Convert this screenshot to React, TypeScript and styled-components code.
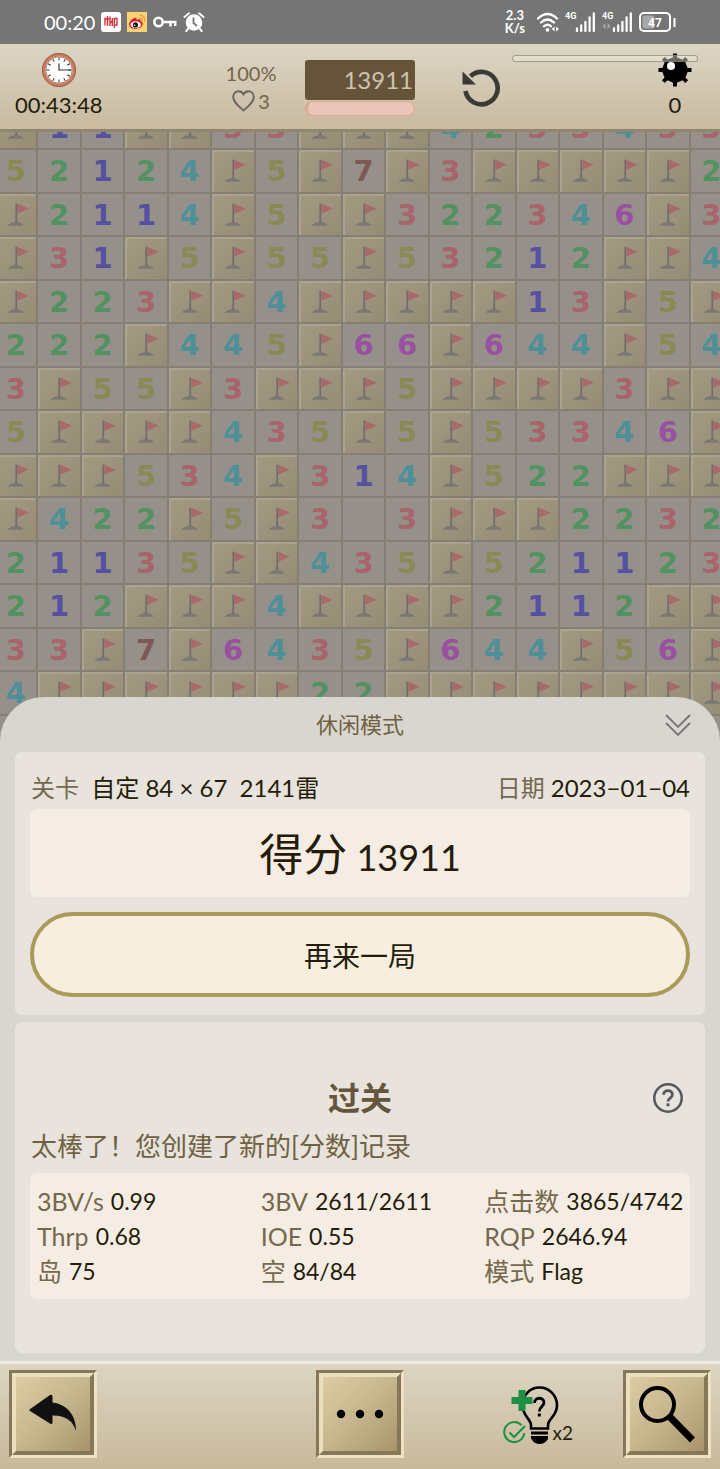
import React from "react";
import styled, { createGlobalStyle, css } from "styled-components";

const GlobalStyle = createGlobalStyle`
  *, *::before, *::after { box-sizing: border-box; }
  body {
    margin: 0;
    background: #d9d6cf;
    color: #241c08;
    font-family: Lato, "Noto Sans CJK SC", sans-serif;
  }
  button { font: inherit; color: inherit; margin: 0; padding: 0; cursor: pointer; }
  h1, h2, p, dl, dd, dt { margin: 0; font-weight: 400; }
`;

const Screen = styled.div`
  display: flex;
  flex-direction: column;
  min-height: 100vh;
  overflow: hidden;
`;

/* ---------- status bar ---------- */

const StatusBar = styled.div`
  display: flex;
  align-items: center;
  justify-content: space-between;
  height: 44px;
  padding: 0 44px;
  background: #757575;
  color: #fff;
  svg { display: block; }
`;

const StatusGroup = styled.div<{ $gap: number }>`
  display: flex;
  align-items: center;
  gap: ${(p) => p.$gap}px;
`;

const StatusTime = styled.span`
  font-size: 20px;
  line-height: 24px;
`;

const NetSpeed = styled.span`
  margin-right: 6px;
  font-size: 13px;
  font-weight: 700;
  line-height: 13px;
  text-align: center;
`;

/* ---------- game header ---------- */

const Header = styled.header`
  display: grid;
  grid-template-columns: 197fr 108fr 110fr 97fr 208fr;
  height: 88px;
  background: linear-gradient(#dcd5c4, #c9baa0);
  border-bottom: 3px solid #8f8670;
`;

const TimerBox = styled.div`
  display: flex;
  flex-direction: column;
  align-items: center;
  justify-self: start;
  padding: 9px 0 0 15px;
  svg { display: block; }
`;

const HeaderValue = styled.span`
  font-size: 22px;
  line-height: 28px;
  margin-top: 4px;
`;

const LivesBox = styled.div`
  display: flex;
  flex-direction: column;
  align-items: center;
  padding-top: 15px;
  color: #73664b;
  font-size: 20px;
  line-height: 28px;
`;

const Lives = styled.span`
  display: flex;
  align-items: center;
  gap: 3px;
`;

const ScoreBox = styled.div`
  padding-top: 16px;
`;

const ScoreValue = styled.div`
  height: 40px;
  padding-right: 2px;
  border-radius: 3px;
  background: #65543a;
  color: #cdc3b0;
  font-size: 24px;
  line-height: 40px;
  text-align: right;
`;

const ScoreBar = styled.div`
  height: 15px;
  margin-top: 1px;
  border: 1px solid #dfa892;
  border-left-width: 3px;
  border-radius: 8px;
  background: #eac6ba;
`;

const RestartButton = styled.button`
  justify-self: end;
  align-self: start;
  margin: 23px 12px 0 0;
  border: 0;
  background: none;
  svg { display: block; }
`;

const MinesBox = styled.div`
  position: relative;
  display: flex;
  flex-direction: column;
  align-items: flex-end;
  padding: 9px 28px 0 0;
  svg { display: block; }
`;

const MineCount = styled(HeaderValue)`
  width: 34px;
  text-align: center;
`;

const MineProgress = styled.div`
  position: absolute;
  top: 11px;
  left: 0;
  right: 22px;
  height: 7px;
  border: 1px solid rgba(130, 125, 110, 0.65);
  border-radius: 4px;
  background: rgba(240, 235, 222, 0.45);
`;

/* ---------- board ---------- */

const Board = styled.main`
  overflow: hidden;
  background: #949089;
`;

const Grid = styled.div`
  display: grid;
  grid-template-columns: repeat(17, 1fr);
  margin: -25px -14px 0 -5px;
`;

const numberColors: Record<string, string> = {
  "1": "#5650a0",
  "2": "#529160",
  "3": "#a8646a",
  "4": "#4f9098",
  "5": "#8a8954",
  "6": "#9a50a0",
  "7": "#7f5a54",
};

const Cell = styled.div<{ $value: string }>`
  display: flex;
  align-items: center;
  justify-content: center;
  aspect-ratio: 1;
  min-width: 0;
  border: 0 solid #857f73;
  border-width: 0 2px 2px 0;
  background: #95918a;
  color: ${(p) => numberColors[p.$value] ?? "inherit"};
  font: 700 29px/32px "DejaVu Sans", sans-serif;
  svg { display: block; width: 100%; height: 100%; }
  ${(p) =>
    p.$value === "F" &&
    css`
      background: linear-gradient(135deg, #a39a82, #968c76);
      box-shadow: inset 2px 2px 0 #aaa38f;
    `}
`;

const rows = [
  "F11FF33FFF4233433",
  "52124F5F7F3FFFFF2",
  "F2114F5FF322346F3",
  "F31F5F55F53212FF4",
  "F223FF4FFFFF13F5F",
  "222F445F66F644F54",
  "3F55F3FFF5FFFF3FF",
  "5FFFF435F5F53346F",
  "FFF534F314F522FFF",
  "F422F5F3 3FFF2232",
  "21135FF435F521123",
  "212FFF4FFFF2112FF",
  "33F7F6435F644F56F",
  "4FFFFFF22FFFFFFFF",
  "                 ",
];

/* ---------- result sheet ---------- */

const Sheet = styled.section`
  position: relative;
  flex: 1;
  display: flex;
  flex-direction: column;
  gap: 7px;
  margin-top: -62px;
  padding: 0 15px 8px;
  border-radius: 44px 44px 0 0;
  background: #d9d6cf;
`;

const SheetHead = styled.div`
  display: grid;
  grid-template-columns: 1fr auto 1fr;
  align-items: center;
  height: 48px;
  padding: 8px 14px 0;
`;

const SheetTitle = styled.h1`
  grid-column: 2;
  color: #6f6142;
  font-size: 22px;
  line-height: 28px;
`;

const IconButton = styled.button`
  justify-self: end;
  border: 0;
  background: none;
  color: #56595c;
  svg { display: block; }
`;

const Card = styled.div`
  padding: 15px;
  border-radius: 7px;
  background: #e8e3dc;
`;

const Info = styled.div`
  display: flex;
  justify-content: space-between;
  padding: 4px 0 4px 1px;
  font-size: 24px;
  line-height: 34px;
  white-space: pre;
`;

const Label = styled.span`
  color: #75684c;
`;

const ScorePanel = styled.div`
  height: 88px;
  border-radius: 7px;
  background: #f5ede4;
  font-size: 36px;
  line-height: 90px;
  text-align: center;
`;

const ScoreWord = styled.span`
  font-size: 44px;
`;

const AgainButton = styled.button`
  display: block;
  width: 100%;
  height: 85px;
  margin: 15px 0 3px;
  border: 4px solid #ab9b58;
  border-radius: 43px;
  background: #f8eee0;
  font-size: 28px;
`;

const ResultCard = styled(Card)`
  flex: 1;
  padding-top: 54px;
`;

const ResultHead = styled.div`
  display: grid;
  grid-template-columns: 1fr auto 1fr;
  align-items: center;
  height: 44px;
  padding: 0 6px;
`;

const ResultTitle = styled.h2`
  grid-column: 2;
  color: #65553a;
  font-size: 32px;
  font-weight: 700;
  line-height: 44px;
`;

const Message = styled.p`
  padding: 7px 0 8px 1px;
  color: #6f6142;
  font-size: 26px;
  line-height: 38px;
  white-space: nowrap;
`;

const Stats = styled.dl`
  display: grid;
  grid-template-columns: repeat(3, 1fr);
  column-gap: 18px;
  padding: 11px 0 10px 7px;
  border-radius: 7px;
  background: #f5ede4;
  font-size: 23px;
  line-height: 35px;
`;

const Stat = styled.div`
  display: flex;
  gap: 7px;
  min-width: 0;
  white-space: nowrap;
  dt { color: #75684c; font-size: 25px; }
`;

const stats = [
  ["3BV/s", "0.99"],
  ["3BV", "2611/2611"],
  ["点击数", "3865/4742"],
  ["Thrp", "0.68"],
  ["IOE", "0.55"],
  ["RQP", "2646.94"],
  ["岛", "75"],
  ["空", "84/84"],
  ["模式", "Flag"],
];

/* ---------- bottom toolbar ---------- */

const Toolbar = styled.footer`
  position: relative;
  display: grid;
  grid-template-columns: 1fr auto 1fr;
  align-items: start;
  height: 108px;
  padding: 6px 9px 0;
  border-top: 3px solid #f0ede6;
  background: linear-gradient(#dcd4c2, #c8b99a);
`;

const ToolbarEnd = styled.div`
  display: flex;
  justify-content: flex-end;
  gap: 50px;
`;

const BevelButton = styled.button`
  width: 88px;
  height: 88px;
  border: 3px solid;
  border-color: #857757 #eee2c2 #eee2c2 #857757;
  background: none;
`;

const BevelFace = styled.span`
  display: flex;
  align-items: center;
  justify-content: center;
  width: 100%;
  height: 100%;
  border: 4px solid;
  border-color: #ecdfbb #857757 #857757 #ecdfbb;
  background: linear-gradient(135deg, #dccba3, #c6b68d 50%, #a8946b);
  svg { display: block; flex: none; }
`;

const HintButton = styled.button`
  display: flex;
  align-items: flex-end;
  height: 75px;
  border: 0;
  background: none;
  font-size: 19px;
  line-height: 24px;
  svg { display: block; margin-right: -8px; }
`;

const FlagIcon = () => (
  <svg viewBox="0 0 41 41" aria-hidden="true">
    <path d="M12.500 31.500 Q14 28.500 19 28 L20.500 26.500 L23 28 Q27 28.500 28.500 31.500 Z" fill="#7b7874" />
    <path d="M21 9.500 V28" stroke="#716d6b" strokeWidth="1.700" />
    <path d="M22 9.700 L33.500 14.700 L22 19.500 Z" fill="#a9686a" />
  </svg>
);

const ClockIcon = () => (
  <svg width="34" height="34" viewBox="0 0 34 34" aria-hidden="true">
    <circle cx="17" cy="17" r="15.300" fill="#fff" stroke="#c97b5d" strokeWidth="3.400" />
    <circle cx="17" cy="17" r="16.600" fill="none" stroke="#8f5942" strokeWidth=".8" />
    <circle cx="17" cy="17" r="13.200" fill="none" stroke="#9a6650" strokeWidth=".8" />
    {Array.from({ length: 12 }, (_, i) => (
      <path key={i} d="M17 4.500 V7.500" stroke="#333" strokeWidth="1" transform={`rotate(${i * 30} 17 17)`} />
    ))}
    <path d="M17 10.500 V17 H29" fill="none" stroke="#333" strokeWidth="1.200" />
  </svg>
);

const MineIcon = () => (
  <svg width="34" height="34" viewBox="0 0 34 34" aria-hidden="true">
    <circle cx="17" cy="17" r="12.500" />
    {Array.from({ length: 8 }, (_, i) => (
      <path key={i} d="M13.500 6 L15 4 V.5 H19 V4 L20.500 6 Z" transform={`rotate(${i * 45} 17 17)`} />
    ))}
    <circle cx="13" cy="13" r="4" fill="#fff" />
  </svg>
);

const RestartIcon = () => (
  <svg width="40" height="40" viewBox="0 0 40 40" aria-hidden="true">
    <path d="M5.500 24 A16.200 16.200 0 1 0 10.500 9.200" fill="none" stroke="#3a3a37" strokeWidth="4.600" />
    <path d="M2.500 4.500 V17.500 H16 Z" fill="#3a3a37" />
  </svg>
);

const Signal = ({ data }: { data?: boolean }) => (
  <svg width="32" height="24" viewBox="0 0 32 24" aria-hidden="true">
    <text x="0" y="9" fill="#fff" fontFamily="Roboto, sans-serif" fontWeight="700" fontSize="9">4G</text>
    {data && <path d="M3.500 13 V19 L.5 16 Z M5.500 13 V19 L8.500 16 Z" fill="#a8a8a8" />}
    <path d="M12 18.500 V21 M16.200 15.500 V21 M20.400 12 V21 M24.600 7.500 V21 M28.800 3.500 V21" stroke="#fff" strokeWidth="2.300" strokeLinecap="round" />
  </svg>
);

export default function App() {
  return (
    <>
      <GlobalStyle />
      <Screen>
        <StatusBar>
          <StatusGroup $gap={6}>
            <StatusTime>00:20</StatusTime>
            <svg width="20" height="20" viewBox="0 0 20 20" aria-hidden="true">
              <rect width="20" height="20" rx="3" fill="#fff" />
              <path d="M4 5.500 V13.500 M6.500 4 V14 M3.500 7 H9.500 M9 4.500 V14 M11.300 6 V14 M9 11 L11.300 9 M13.300 6 V16 M13.300 6.500 H16 V13 H13.300" fill="none" stroke="#d9303c" strokeWidth="1.400" />
            </svg>
            <svg width="20" height="20" viewBox="0 0 20 20" aria-hidden="true">
              <rect width="20" height="20" fill="#fbd273" />
              <path d="M2 12.500 C2 9 7.500 4.500 9.300 6 C10 6.600 9.700 7.600 9.500 8 C11.500 7 14 7 13.700 9.300 C16 10 16.300 12 15.300 13.500 C12.500 18.500 2 17.500 2 12.500 Z" fill="#d81e28" />
              <ellipse cx="8.700" cy="12.700" rx="5.200" ry="3.400" fill="#fff" />
              <circle cx="8.400" cy="12.900" r="2.600" fill="#171717" />
              <circle cx="7.600" cy="13.300" r=".8" fill="#fff" />
              <path d="M12.500 6.200 Q15.400 5.800 15.200 9 M12.300 3.500 Q18.400 2.800 17.800 9.500" fill="none" stroke="#ed9a32" strokeWidth="1.300" />
            </svg>
            <svg width="24" height="20" viewBox="0 0 24 20" aria-hidden="true">
              <circle cx="5.500" cy="10" r="4.200" fill="none" stroke="#fff" strokeWidth="2.600" />
              <path d="M10 10 H23.500 M17.500 10 V14.500 M22.200 10 V14" stroke="#fff" strokeWidth="2.400" />
            </svg>
            <svg width="22" height="20" viewBox="0 0 22 20" aria-hidden="true">
              <circle cx="11" cy="10.500" r="8.300" fill="#fff" />
              <path d="M1.500 5 L6 1.300 M20.500 5 L16 1.300 M5 17 L3.300 19 M17 17 L18.700 19" stroke="#fff" strokeWidth="2" strokeLinecap="round" />
              <path d="M10.500 5.500 V11 L14 14" fill="none" stroke="#757575" strokeWidth="1.800" />
            </svg>
          </StatusGroup>
          <StatusGroup $gap={5}>
            <NetSpeed>2.3<br />K/s</NetSpeed>
            <svg width="24" height="24" viewBox="0 0 24 24" aria-hidden="true">
              <path d="M2 8.500 Q11.500 -.5 21 8.500 M5 12.500 Q11.500 6.500 18 12.500 M8 16.300 Q11.500 13.300 15 16.300" fill="none" stroke="#fff" strokeWidth="2.300" strokeLinecap="round" />
              <circle cx="11.500" cy="19.800" r="1.900" fill="#fff" />
              <path d="M18.600 16.500 V21.500 L15.800 19 Z M20 16.500 V21.500 L23 19 Z" fill="#fff" />
            </svg>
            <Signal />
            <Signal data />
            <svg width="37" height="20" viewBox="0 0 37 20" aria-hidden="true">
              <rect x="1" y="1" width="30" height="18" rx="4" fill="none" stroke="#fff" strokeWidth="2" />
              <rect x="3.500" y="3.500" width="12" height="13" rx="2" fill="#a9a9a9" />
              <path d="M35.500 6 V15" stroke="#fff" strokeWidth="2" />
              <text x="16" y="14.500" textAnchor="middle" fill="#fff" fontFamily="Roboto, sans-serif" fontWeight="700" fontSize="12">47</text>
            </svg>
          </StatusGroup>
        </StatusBar>

        <Header>
          <TimerBox>
            <ClockIcon />
            <HeaderValue>00:43:48</HeaderValue>
          </TimerBox>
          <LivesBox>
            <span>100%</span>
            <Lives>
              <svg width="23" height="22" viewBox="0 0 23 22" aria-hidden="true">
                <path d="M11.500 20.500 C6 15.500 1.200 12 1.200 7 C1.200 3.500 3.700 1.300 6.500 1.300 C8.800 1.300 10.500 2.500 11.500 4.300 C12.500 2.500 14.200 1.300 16.500 1.300 C19.300 1.300 21.800 3.500 21.800 7 C21.800 12 17 15.500 11.500 20.500 Z" fill="none" stroke="#686661" strokeWidth="1.900" />
              </svg>
              3
            </Lives>
          </LivesBox>
          <ScoreBox>
            <ScoreValue>13911</ScoreValue>
            <ScoreBar />
          </ScoreBox>
          <RestartButton type="button" aria-label="重新开始">
            <RestartIcon />
          </RestartButton>
          <MinesBox>
            <MineIcon />
            <MineCount>0</MineCount>
            <MineProgress />
          </MinesBox>
        </Header>

        <Board>
          <Grid>
            {rows.flatMap((row, r) =>
              row.split("").map((value, c) => (
                <Cell key={`${r}-${c}`} $value={value}>
                  {value === "F" ? <FlagIcon /> : value}
                </Cell>
              )),
            )}
          </Grid>
        </Board>

        <Sheet>
          <SheetHead>
            <SheetTitle>休闲模式</SheetTitle>
            <IconButton type="button" aria-label="收起">
              <svg width="26" height="24" viewBox="0 0 26 24" aria-hidden="true">
                <path d="M1 2 L13 14 L25 2 M1 10 L13 22 L25 10" fill="none" stroke="#77777a" strokeWidth="1.900" />
              </svg>
            </IconButton>
          </SheetHead>

          <Card>
            <Info>
              <span><Label>关卡</Label>  自定 84 × 67  2141雷</span>
              <span><Label>日期</Label> 2023−01−04</span>
            </Info>
            <ScorePanel><ScoreWord>得分</ScoreWord> 13911</ScorePanel>
            <AgainButton type="button">再来一局</AgainButton>
          </Card>

          <ResultCard>
            <ResultHead>
              <ResultTitle>过关</ResultTitle>
              <IconButton type="button" aria-label="帮助">
                <svg width="32" height="32" viewBox="0 0 24 24" aria-hidden="true">
                  <circle cx="12" cy="12" r="10.300" fill="none" stroke="currentColor" strokeWidth="1.900" />
                  <path d="M8.700 9.600 C8.700 5.200 15.300 5.500 15.300 9.500 C15.300 11.800 12 12 12 14.600" fill="none" stroke="currentColor" strokeWidth="2.100" />
                  <rect x="10.900" y="16" width="2.200" height="2.200" fill="currentColor" />
                </svg>
              </IconButton>
            </ResultHead>
            <Message>太棒了！您创建了新的[分数]记录</Message>
            <Stats>
              {stats.map(([name, value]) => (
                <Stat key={name}>
                  <dt>{name}</dt>
                  <dd>{value}</dd>
                </Stat>
              ))}
            </Stats>
          </ResultCard>
        </Sheet>

        <Toolbar>
          <div>
            <BevelButton type="button" aria-label="返回">
              <BevelFace>
                <svg width="50" height="40" viewBox="0 0 50 40" aria-hidden="true">
                  <path d="M1.500 15.500 L22 1 Q24.500 0 24.500 3 V8.500 C39 10 48.500 22 48 37 Q43 21 24.500 21.500 V28 Q24.500 31 22 29.500 L2 17 Q1 16.200 1.500 15.500 Z" fill="#111" />
                </svg>
              </BevelFace>
            </BevelButton>
          </div>
          <BevelButton type="button" aria-label="更多">
            <BevelFace>
              <svg width="50" height="10" viewBox="0 0 50 10" aria-hidden="true">
                <circle cx="6" cy="5" r="4.200" />
                <circle cx="25" cy="5" r="4.200" />
                <circle cx="44" cy="5" r="4.200" />
              </svg>
            </BevelFace>
          </BevelButton>
          <ToolbarEnd>
            <HintButton type="button">
              <svg width="58" height="60" viewBox="0 0 58 60" aria-hidden="true">
                <path d="M28 43.500 V40 C28 34 19.500 31 19.500 20.500 C19.500 10 27 2.500 36.500 2.500 C46 2.500 54 10 54 20.500 C54 31 45 34 45 40 V43.500 Z" fill="none" stroke="#000" strokeWidth="2.600" />
                <path d="M28 48 H45 M28 52.500 H45" stroke="#000" strokeWidth="2.800" />
                <path d="M28.500 54 H45 Q42 59 36.500 59 Q31 59 28.500 54 Z" />
                <path d="M31.500 18 C31.500 11.500 41 12 41 17.500 C41 21.500 36.300 21.500 36.300 26.500" fill="none" stroke="#000" strokeWidth="2.800" />
                <rect x="34.800" y="28.500" width="3" height="3" />
                <path d="M8.500 15.500 H29.500 M19 5 V26" stroke="#1f8f43" strokeWidth="7" />
                <path d="M18.500 40.200 A10 10 0 1 0 21.200 48" fill="none" stroke="#1f8f43" strokeWidth="2" />
                <path d="M6.500 47.500 L11 52 L22 41" fill="none" stroke="#1f8f43" strokeWidth="2" />
              </svg>
              x2
            </HintButton>
            <BevelButton type="button" aria-label="搜索">
              <BevelFace>
                <svg width="58" height="58" viewBox="0 0 58 58" aria-hidden="true">
                  <circle cx="19.500" cy="19.500" r="16.500" fill="none" stroke="#000" strokeWidth="4" />
                  <path d="M31 31 L54.500 55" stroke="#000" strokeWidth="7" />
                </svg>
              </BevelFace>
            </BevelButton>
          </ToolbarEnd>
        </Toolbar>
      </Screen>
    </>
  );
}
